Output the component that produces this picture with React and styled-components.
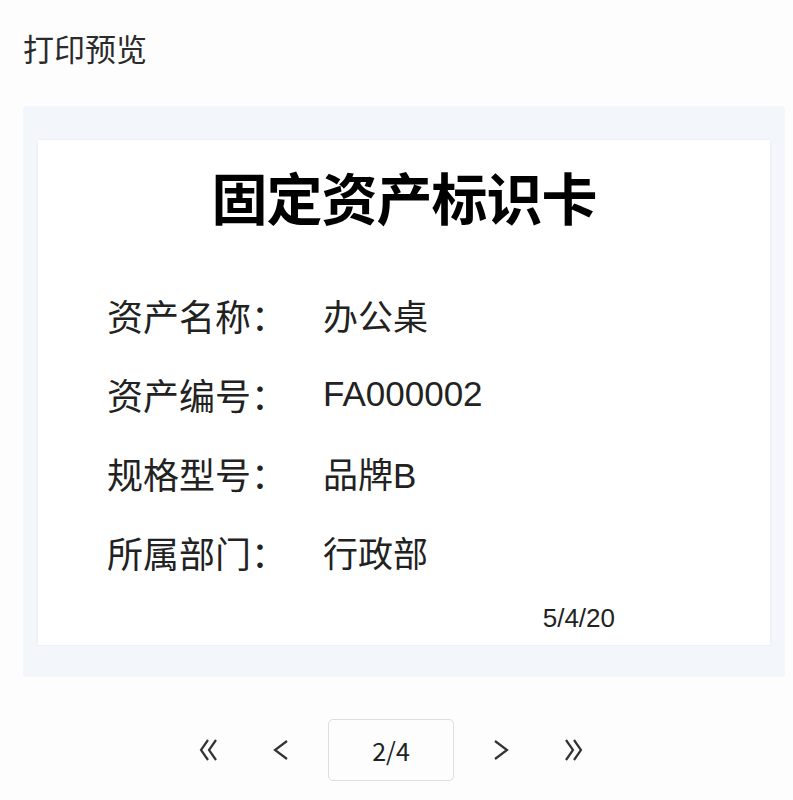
import React from "react";
import styled, { createGlobalStyle } from "styled-components";

const GlobalStyle = createGlobalStyle`
  html, body {
    margin: 0;
    padding: 0;
    background: #fdfdfe;
    font-family: "Noto Sans CJK SC", "Liberation Sans", sans-serif;
    color: #222;
  }
`;

const Page = styled.div`
  padding: 28px 8px 0 23px;
  display: flex;
  flex-direction: column;
`;

const Heading = styled.div`
  font-size: 31px;
  line-height: 40px;
  color: #2b2b2b;
`;

const Panel = styled.div`
  margin-top: 38px;
  width: 762px;
  box-sizing: border-box;
  background: #f3f6fa;
  border-radius: 4px;
  padding: 34px 15px 32px;
`;

const Card = styled.div`
  background: #ffffff;
  display: flex;
  flex-direction: column;
  padding: 23px 69px 12px;
  box-shadow: 0 0 2px rgba(200, 210, 225, 0.4);
`;

const CardTitle = styled.div`
  font-size: 56px;
  line-height: 66px;
  font-weight: 700;
  text-align: center;
  color: #000;
  letter-spacing: -1px;
`;

const Rows = styled.div`
  margin-top: 46px;
  display: grid;
  grid-template-columns: 216px auto;
  grid-auto-rows: 79px;
  align-items: center;
  font-family: "Liberation Sans", "Noto Sans CJK SC", sans-serif;
  font-size: 35px;
  color: #222;
`;

const Label = styled.div`
  font-family: "Noto Sans CJK SC", sans-serif;
  font-size: 36px;
`;

const Value = styled.div``;

const DateText = styled.div`
  align-self: flex-end;
  margin: 12px 86px 0 0;
  font-family: "Liberation Sans", sans-serif;
  font-size: 26px;
  line-height: 30px;
  color: #222;
`;

const Pager = styled.div`
  margin-top: 42px;
  display: flex;
  align-items: center;
  justify-content: center;
  gap: 22px;
  padding-right: 26px;
`;

const NavButton = styled.button`
  width: 50px;
  height: 50px;
  border: none;
  background: transparent;
  padding: 0;
  display: flex;
  align-items: center;
  justify-content: center;
  color: #333;
  cursor: pointer;
`;

const PageBox = styled.div`
  width: 126px;
  height: 62px;
  box-sizing: border-box;
  border: 1.5px solid #dedede;
  border-radius: 5px;
  display: flex;
  align-items: center;
  justify-content: center;
  font-size: 25px;
  color: #222;
`;

const Double = ({ flip }) => (
  <svg width="22" height="24" viewBox="0 0 22 24" style={flip ? { transform: "scaleX(-1)" } : undefined}>
    <path d="M10 2 L3 12 L10 22 M18 2 L11 12 L18 22" fill="none" stroke="currentColor" strokeWidth="2.2" />
  </svg>
);

const Single = ({ flip }) => (
  <svg width="16" height="24" viewBox="0 0 16 24" style={flip ? { transform: "scaleX(-1)" } : undefined}>
    <path d="M14 3 L2 12 L14 21" fill="none" stroke="currentColor" strokeWidth="2.2" />
  </svg>
);

const fields = [
  ["资产名称：", "办公桌"],
  ["资产编号：", "FA000002"],
  ["规格型号：", "品牌B"],
  ["所属部门：", "行政部"],
];

export default function App() {
  return (
    <Page>
      <GlobalStyle />
      <Heading>打印预览</Heading>
      <Panel>
        <Card>
          <CardTitle>固定资产标识卡</CardTitle>
          <Rows>
            {fields.map(([k, v]) => (
              <React.Fragment key={k}>
                <Label>{k}</Label>
                <Value>{v}</Value>
              </React.Fragment>
            ))}
          </Rows>
          <DateText>5/4/20</DateText>
        </Card>
      </Panel>
      <Pager>
        <NavButton><Double /></NavButton>
        <NavButton><Single /></NavButton>
        <PageBox>2/4</PageBox>
        <NavButton><Single flip /></NavButton>
        <NavButton><Double flip /></NavButton>
      </Pager>
    </Page>
  );
}
